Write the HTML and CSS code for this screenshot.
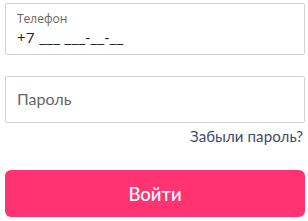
FILE: index.html
```html
<!DOCTYPE html>
<html lang="ru">
<head>
  <meta charset="UTF-8" />
  <title>Вход</title>
  <link rel="stylesheet" href="styles.css">
</head>
<body>
  <form class="login">
    <!-- Phone -->
    <label class="field field-phone">
      <span class="field-label">Телефон</span>
      <input type="text" class="field-input" value="+7 ___ ___-__-__" />
    </label>

    <!-- Password -->
    <label class="field field-pass">
      <input type="password" class="field-input" placeholder="Пароль" />
    </label>

    <div class="forgot-row">
      <a href="#" class="forgot">Забыли пароль?</a>
    </div>

    <button type="button" class="submit">Войти</button>
  </form>
</body>
</html>
```

FILE: styles.css
```css
* {
  margin: 0;
  padding: 0;
  box-sizing: border-box;
}

body {
  font-family: "Open Sans", Arial, sans-serif;
  background: #fff;
  padding: 3px 3px 0 5px;
}

.login {
  display: flex;
  flex-direction: column;
  width: 300px;
}

.field {
  display: flex;
  flex-direction: column;
  justify-content: center;
  border: 1px solid #d2d2d2;
  border-radius: 2px;
  padding: 0 11px;
}

.field-phone {
  height: 52px;
}

.field-pass {
  height: 47px;
  margin-top: 21px;
}

.field-label {
  font-size: 12px;
  color: #666;
  line-height: 15px;
}

.field-input {
  border: none;
  outline: none;
  background: none;
  font-family: inherit;
  width: 100%;
}

.field-phone .field-input {
  font-size: 15px;
  letter-spacing: 0.4px;
  color: #222;
  line-height: 22px;
}

.field-pass .field-input {
  font-family: Lato, "Noto Sans", sans-serif;
  font-size: 16px;
  margin-top: -2px;
}

.field-pass .field-input::placeholder {
  color: #666;
}

.forgot-row {
  display: flex;
  justify-content: flex-end;
  margin-top: 4px;
  height: 24px;
}

.forgot {
  font-family: Lato, "Noto Sans", sans-serif;
  font-size: 15px;
  letter-spacing: 0.1px;
  color: #3a4a6c;
  text-decoration: none;
  margin-right: 2px;
}

.submit {
  margin-top: 19px;
  height: 47px;
  border: none;
  border-radius: 6px;
  background: #ff3372;
  color: #fff;
  font-family: Lato, "Noto Sans", sans-serif;
  font-size: 18.5px;
  font-weight: 500;
  cursor: pointer;
}
```
